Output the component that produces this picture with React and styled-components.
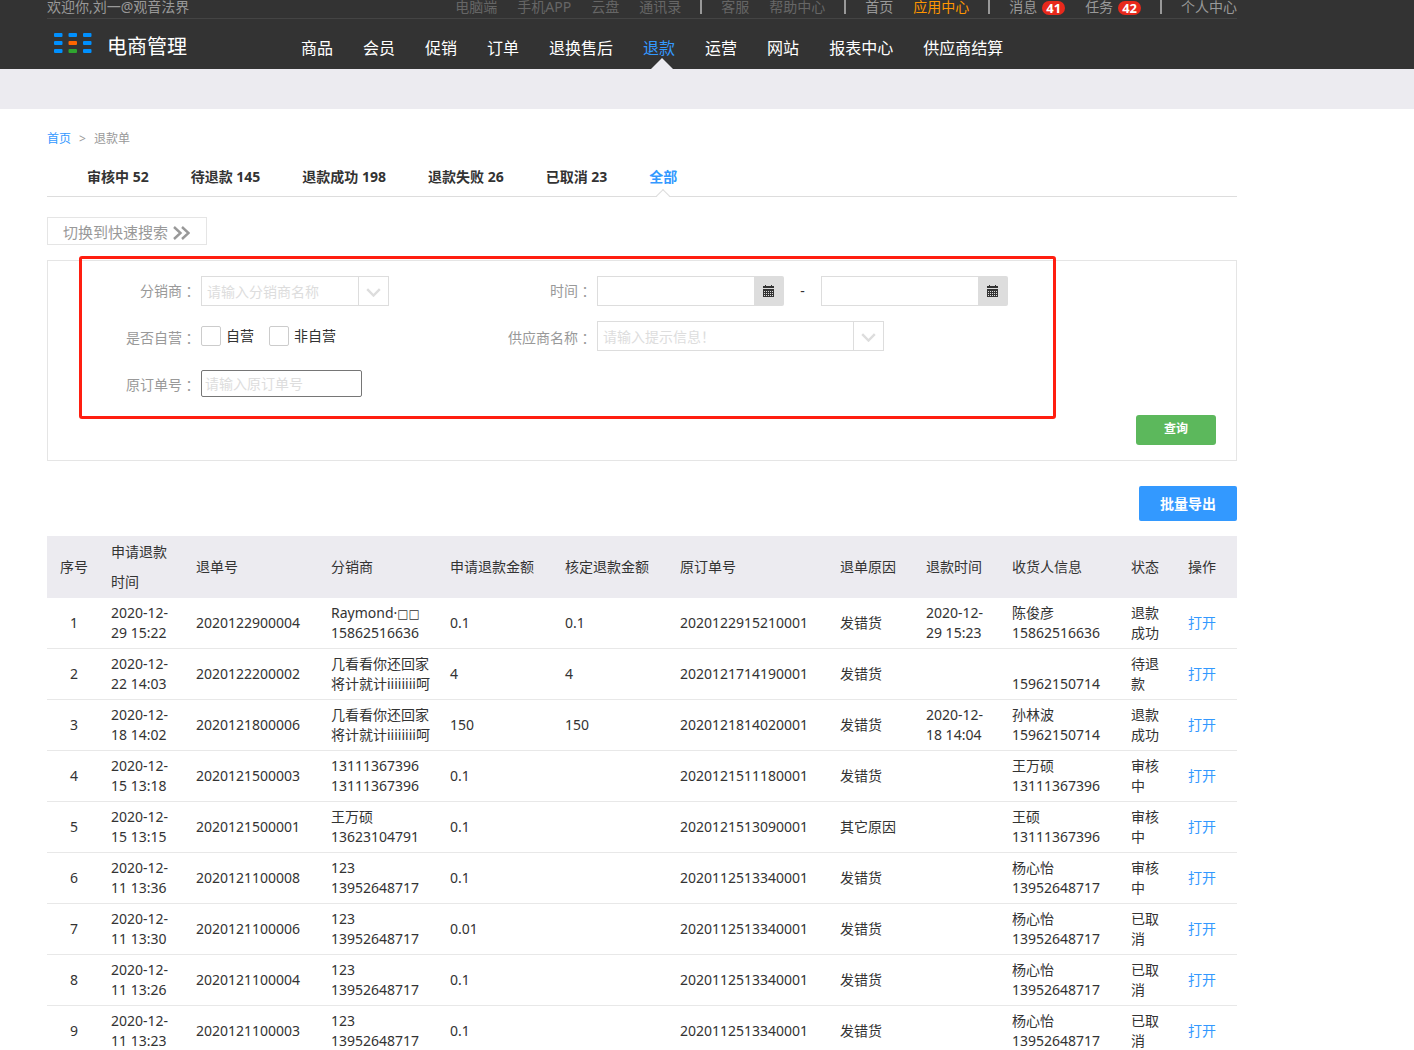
import React from "react";
import styled, { createGlobalStyle, css } from "styled-components";

const topLinks = [
  { text: "电脑端", color: "#666" },
  { text: "手机APP", color: "#666" },
  { text: "云盘", color: "#666" },
  { text: "通讯录", color: "#666" },
  null,
  { text: "客服", color: "#666" },
  { text: "帮助中心", color: "#666" },
  null,
  { text: "首页" },
  { text: "应用中心", color: "#ff9600" },
  null,
  { text: "消息", count: 41 },
  { text: "任务", count: 42 },
  null,
  { text: "个人中心" },
];

const menus = [
  "商品",
  "会员",
  "促销",
  "订单",
  "退换售后",
  "退款",
  "运营",
  "网站",
  "报表中心",
  "供应商结算",
];

const tabs = [
  "审核中 52",
  "待退款 145",
  "退款成功 198",
  "退款失败 26",
  "已取消 23",
  "全部",
];

const columns = [
  { title: "序号", width: 54 },
  { title: "申请退款时间", width: 85 },
  { title: "退单号", width: 135 },
  { title: "分销商", width: 119 },
  { title: "申请退款金额", width: 115 },
  { title: "核定退款金额", width: 115 },
  { title: "原订单号", width: 160 },
  { title: "退单原因", width: 86 },
  { title: "退款时间", width: 86 },
  { title: "收货人信息", width: 119 },
  { title: "状态", width: 57 },
  { title: "操作", width: 59 },
];

const rows = [
  {
    applied: "2020-12-29 15:22",
    refundNo: "2020122900004",
    dealer: ["Raymond·", "15862516636"],
    missing: "□□",
    amount: "0.1",
    approved: "0.1",
    orderNo: "2020122915210001",
    reason: "发错货",
    refunded: "2020-12-29 15:23",
    receiver: ["陈俊彦", "15862516636"],
    status: "退款成功",
  },
  {
    applied: "2020-12-22 14:03",
    refundNo: "2020122200002",
    dealer: ["几看看你还回家", "将计就计iiiiiiii呵"],
    amount: "4",
    approved: "4",
    orderNo: "2020121714190001",
    reason: "发错货",
    receiver: ["", "15962150714"],
    status: "待退款",
  },
  {
    applied: "2020-12-18 14:02",
    refundNo: "2020121800006",
    dealer: ["几看看你还回家", "将计就计iiiiiiii呵"],
    amount: "150",
    approved: "150",
    orderNo: "2020121814020001",
    reason: "发错货",
    refunded: "2020-12-18 14:04",
    receiver: ["孙林波", "15962150714"],
    status: "退款成功",
  },
  {
    applied: "2020-12-15 13:18",
    refundNo: "2020121500003",
    dealer: ["13111367396", "13111367396"],
    amount: "0.1",
    orderNo: "2020121511180001",
    reason: "发错货",
    receiver: ["王万硕", "13111367396"],
    status: "审核中",
  },
  {
    applied: "2020-12-15 13:15",
    refundNo: "2020121500001",
    dealer: ["王万硕", "13623104791"],
    amount: "0.1",
    orderNo: "2020121513090001",
    reason: "其它原因",
    receiver: ["王硕", "13111367396"],
    status: "审核中",
  },
  {
    applied: "2020-12-11 13:36",
    refundNo: "2020121100008",
    dealer: ["123", "13952648717"],
    amount: "0.1",
    orderNo: "2020112513340001",
    reason: "发错货",
    receiver: ["杨心怡", "13952648717"],
    status: "审核中",
  },
  {
    applied: "2020-12-11 13:30",
    refundNo: "2020121100006",
    dealer: ["123", "13952648717"],
    amount: "0.01",
    orderNo: "2020112513340001",
    reason: "发错货",
    receiver: ["杨心怡", "13952648717"],
    status: "已取消",
  },
  {
    applied: "2020-12-11 13:26",
    refundNo: "2020121100004",
    dealer: ["123", "13952648717"],
    amount: "0.1",
    orderNo: "2020112513340001",
    reason: "发错货",
    receiver: ["杨心怡", "13952648717"],
    status: "已取消",
  },
  {
    applied: "2020-12-11 13:23",
    refundNo: "2020121100003",
    dealer: ["123", "13952648717"],
    amount: "0.1",
    orderNo: "2020112513340001",
    reason: "发错货",
    receiver: ["杨心怡", "13952648717"],
    status: "已取消",
  },
];

function LogoIcon() {
  return (
    <svg width="38" height="20" viewBox="0 0 38 20" aria-hidden="true">
      {[0, 1, 2].map((r) =>
        [0, 1, 2].map((c) => (
          <rect
            key={`${r}${c}`}
            x={c * 14.5}
            y={r * 8}
            width="8.5"
            height="4"
            rx="1"
            fill={
              c === 1 && r === 1 ? "#ff6600" : c === 1 && r === 2 ? "#2fa52f" : "#0090ff"
            }
          />
        ))
      )}
    </svg>
  );
}

function Chevron() {
  return (
    <svg width="15" height="9" viewBox="0 0 15 9" aria-hidden="true">
      <path d="M1.2 1.2 L7.5 7.5 L13.8 1.2" fill="none" stroke="#ddd" strokeWidth="2.4" />
    </svg>
  );
}

function CalendarIcon() {
  return (
    <svg width="12" height="12" viewBox="0 0 12 12" aria-hidden="true">
      <path d="M0 1h2V0h1v1h5V0h1v1h2v2H0z" fill="#333" />
      <path d="M0 4h11v8H0z" fill="#333" />
      <path
        d="M1 6.5h9M1 8.5h9M1 10.5h9"
        stroke="#ddd"
        strokeWidth="1"
        strokeDasharray="1 1"
      />
    </svg>
  );
}

function FieldLabel({ htmlFor, children }) {
  return (
    <Label htmlFor={htmlFor}>
      {children}
      <Colon>：</Colon>
    </Label>
  );
}

function Combo({ id, placeholder, wide }) {
  return (
    <ComboBox $wide={wide}>
      <ComboInput id={id} type="text" placeholder={placeholder} />
      <ComboButton type="button" aria-label="展开">
        <Chevron />
      </ComboButton>
    </ComboBox>
  );
}

function DateField({ id, label }) {
  return (
    <DateBox>
      <DateInput id={id} type="text" aria-label={label} />
      <DateButton type="button" aria-label="选择日期">
        <CalendarIcon />
      </DateButton>
    </DateBox>
  );
}

function Header() {
  return (
    <Head>
      <Wrap>
        <TopBar>
          <Welcome>欢迎你,刘一@观音法界</Welcome>
          {topLinks.map((item, i) =>
            item ? (
              <TopLink key={i} href="#" $color={item.color}>
                {item.text}
                {item.count && <Badge>{item.count}</Badge>}
              </TopLink>
            ) : (
              <Separator key={i} />
            )
          )}
        </TopBar>
        <NavBar>
          <Logo href="#">
            <LogoIcon />
            <LogoText>电商管理</LogoText>
          </Logo>
          <Menu>
            {menus.map((name) => (
              <MenuLink key={name} href="#" $active={name === "退款"}>
                {name}
              </MenuLink>
            ))}
          </Menu>
        </NavBar>
      </Wrap>
    </Head>
  );
}

function SearchPanel() {
  return (
    <Panel>
      <Fields>
        <FieldLabel htmlFor="dealer">分销商</FieldLabel>
        <Field>
          <Combo id="dealer" placeholder="请输入分销商名称" />
        </Field>
        <FieldLabel htmlFor="start">时间</FieldLabel>
        <Field>
          <DateField id="start" label="开始时间" />
          <Dash>-</Dash>
          <DateField id="end" label="结束时间" />
        </Field>

        <FieldLabel htmlFor="self">是否自营</FieldLabel>
        <Field>
          <CheckLabel>
            <Check id="self" type="checkbox" />
            自营
          </CheckLabel>
          <CheckLabel>
            <Check type="checkbox" />
            非自营
          </CheckLabel>
        </Field>
        <FieldLabel htmlFor="supplier">供应商名称</FieldLabel>
        <Field>
          <Combo id="supplier" placeholder="请输入提示信息！" wide />
        </Field>

        <FieldLabel htmlFor="order">原订单号</FieldLabel>
        <Field>
          <OrderInput id="order" type="text" placeholder="请输入原订单号" />
        </Field>
      </Fields>
      <QueryButton type="button">查询</QueryButton>
      <Highlight />
    </Panel>
  );
}

function RefundTable() {
  return (
    <Table>
      <colgroup>
        {columns.map((col) => (
          <col key={col.title} style={{ width: `${(col.width / 1190) * 100}%` }} />
        ))}
      </colgroup>
      <thead>
        <tr>
          {columns.map((col, i) => (
            <Th key={col.title} $center={i === 0}>
              {col.title}
            </Th>
          ))}
        </tr>
      </thead>
      <tbody>
        {rows.map((row, i) => (
          <tr key={row.refundNo}>
            <Td $center>{i + 1}</Td>
            <Td>{row.applied}</Td>
            <Td>{row.refundNo}</Td>
            <Td $nowrap>
              {row.dealer[0]}
              {row.missing && <Missing>{row.missing}</Missing>}
              <br />
              {row.dealer[1]}
            </Td>
            <Td>{row.amount}</Td>
            <Td>{row.approved}</Td>
            <Td>{row.orderNo}</Td>
            <Td>{row.reason}</Td>
            <Td>{row.refunded}</Td>
            <Td>
              {row.receiver[0]}
              <br />
              {row.receiver[1]}
            </Td>
            <Td>{row.status}</Td>
            <Td>
              <Link href="#">打开</Link>
            </Td>
          </tr>
        ))}
      </tbody>
    </Table>
  );
}

function App() {
  return (
    <>
      <GlobalStyle />
      <Header />
      <SubBand />
      <Wrap as="main">
        <Crumbs>
          <Link href="#">首页</Link>
          <span>&gt;</span>
          <span>退款单</span>
        </Crumbs>
        <Tabs>
          {tabs.map((name) => (
            <Tab key={name} href="#" $active={name === "全部"}>
              {name}
            </Tab>
          ))}
        </Tabs>
        <SwitchButton type="button">
          切换到快速搜索
          <svg width="17" height="14" viewBox="0 0 17 14" aria-hidden="true">
            <path
              d="M1 1 L7.5 7 L1 13 M9 1 L15.5 7 L9 13"
              fill="none"
              stroke="#999"
              strokeWidth="2.4"
            />
          </svg>
        </SwitchButton>
        <SearchPanel />
        <Actions>
          <ExportButton type="button">批量导出</ExportButton>
        </Actions>
        <RefundTable />
      </Wrap>
    </>
  );
}

export default App;

const GlobalStyle = createGlobalStyle`
  * {
    box-sizing: border-box;
  }

  body {
    margin: 0;
    background: #fff;
    color: #333;
    font-family: "Noto Sans", "Noto Sans CJK SC", sans-serif;
    font-size: 14px;
    line-height: 20px;
  }

  a {
    text-decoration: none;
  }

  input,
  button {
    font-family: inherit;
    font-size: 14px;
  }

  input::placeholder {
    color: #ddd;
    opacity: 1;
  }
`;

const Wrap = styled.div`
  max-width: 1190px;
  margin-left: 47px;
`;

const Head = styled.header`
  background: #333;
`;

const TopBar = styled.div`
  display: flex;
  gap: 20px;
  height: 19px;
  border-bottom: 1px solid #444;
  line-height: 14px;
`;

const Welcome = styled.span`
  margin-right: auto;
  color: #999;
`;

const TopLink = styled.a`
  display: flex;
  gap: 5px;
  color: ${(props) => props.$color || "#999"};
`;

const Separator = styled.span`
  width: 2px;
  height: 14px;
  margin: 0 -1px;
  background: #999;
`;

const Badge = styled.span`
  height: 14px;
  margin-top: 1px;
  padding: 0 4px;
  border-radius: 7px;
  background: #e8291c;
  color: #fff;
  font-size: 13px;
  font-weight: bold;
`;

const NavBar = styled.div`
  display: flex;
  height: 50px;
`;

const Logo = styled.a`
  display: flex;
  align-items: center;
  gap: 15px;
  width: 254px;
  padding: 0 0 2px 7px;
  color: #fff;
`;

const LogoText = styled.span`
  padding-top: 8px;
  font-size: 20px;
  line-height: 24px;
`;

const Menu = styled.nav`
  display: flex;
  gap: 30px;
  font-size: 16px;
  line-height: 58px;
`;

const MenuLink = styled.a`
  position: relative;
  color: ${(props) => (props.$active ? "#3399ff" : "#fff")};

  ${(props) =>
    props.$active &&
    css`
      &:after {
        position: absolute;
        content: "";
        left: calc(50% - 8px);
        bottom: 0;
        border: 11px solid transparent;
        border-top: 0;
        border-bottom-color: #ecebf0;
      }
    `}
`;

const SubBand = styled.div`
  height: 40px;
  background: #ecebf0;
`;

const Crumbs = styled.div`
  display: flex;
  gap: 8px;
  padding-top: 20px;
  color: #999;
  font-size: 12px;
`;

const Tabs = styled.nav`
  display: flex;
  gap: 42px;
  margin-top: 8px;
  padding-left: 40px;
  border-bottom: 1px solid #ddd;
  font-weight: bold;
  line-height: 39px;
`;

const Tab = styled.a`
  position: relative;
  color: ${(props) => (props.$active ? "#3399ff" : "#333")};

  ${(props) =>
    props.$active &&
    css`
      &:after {
        position: absolute;
        content: "";
        left: calc(50% - 5px);
        bottom: -5px;
        width: 9px;
        height: 9px;
        border: solid #ddd;
        border-width: 1px 0 0 1px;
        background: linear-gradient(135deg, #fff 60%, transparent 60%);
        transform: rotate(45deg);
      }
    `}
`;

const SwitchButton = styled.button`
  display: flex;
  align-items: center;
  gap: 5px;
  width: 160px;
  height: 28px;
  margin: 20px 0 15px;
  padding: 0 0 0 15px;
  border: 1px solid #e5e5e5;
  background: #fff;
  color: #999;
  font-size: 15px;

  svg {
    margin-top: 4px;
  }
`;

const Panel = styled.section`
  position: relative;
  padding: 15px 20px 15px 0;
  border: 1px solid #e5e5e5;
`;

const Fields = styled.div`
  display: grid;
  grid-template-columns: 148px 238px 148px 1fr;
  grid-template-rows: 30px 34px 30px;
  gap: 15px 5px;
`;

const Label = styled.label`
  display: flex;
  align-items: center;
  justify-content: flex-end;
  padding-bottom: 1px;
  color: #999;
`;

const Colon = styled.span`
  font-family: "Noto Sans CJK TC", sans-serif;
`;

const Field = styled.div`
  display: flex;
  align-items: flex-start;
`;

const ComboBox = styled.div`
  display: flex;
  width: ${(props) => (props.$wide ? 287 : 188)}px;
  height: 30px;
  border: 1px solid #ddd;
`;

const ComboInput = styled.input`
  flex: 1;
  min-width: 0;
  padding: 0 5px;
  border: 0;
`;

const ComboButton = styled.button`
  display: flex;
  align-items: center;
  justify-content: center;
  width: 30px;
  padding: 3px 0 0;
  border: 0;
  border-left: 1px solid #ddd;
  background: #fff;
`;

const DateBox = styled.div`
  display: flex;
  width: 187px;
  height: 30px;
`;

const DateInput = styled.input`
  flex: 1;
  min-width: 0;
  padding: 0 5px;
  border: 1px solid #ddd;
  border-right: 0;
`;

const DateButton = styled.button`
  display: flex;
  align-items: center;
  justify-content: center;
  width: 30px;
  padding: 0;
  border: 0;
  border-radius: 0 2px 2px 0;
  background: #ddd;
`;

const Dash = styled.span`
  width: 37px;
  line-height: 30px;
  text-align: center;
`;

const CheckLabel = styled.label`
  display: flex;
  align-items: center;
  gap: 5px;
  height: 30px;
  margin-right: 15px;
`;

const Check = styled.input`
  appearance: none;
  width: 20px;
  height: 20px;
  margin: 0;
  border: 1px solid #ccc;
  border-radius: 2px;
  background: #fff;
`;

const OrderInput = styled.input`
  width: 161px;
  height: 27px;
  padding: 0 3px;
  border: 1px solid #767676;
  border-radius: 2px;
`;

const QueryButton = styled.button`
  display: block;
  width: 80px;
  height: 30px;
  margin: 15px 0 0 auto;
  padding: 0 0 4px;
  border: 0;
  border-radius: 3px;
  background: #5cb85c;
  color: #fff;
  font-size: 12px;
  font-weight: bold;
`;

/* red frame drawn around the filter fields */
const Highlight = styled.div`
  position: absolute;
  top: -5px;
  left: 31px;
  right: 180px;
  height: 163px;
  border: 3px solid #ff1e10;
  border-radius: 3px;
  pointer-events: none;
`;

const Actions = styled.div`
  display: flex;
  justify-content: flex-end;
  margin: 25px 0 15px;
`;

const ExportButton = styled.button`
  width: 98px;
  height: 35px;
  padding: 0 0 2px;
  border: 0;
  border-radius: 2px;
  background: #3399ff;
  color: #fff;
  font-weight: bold;
`;

const Table = styled.table`
  width: 100%;
  border-spacing: 0;
  table-layout: fixed;
`;

const Th = styled.th`
  padding: 1px 10px;
  background: #ecebf0;
  font-weight: normal;
  line-height: 30px;
  text-align: ${(props) => (props.$center ? "center" : "left")};
`;

const Td = styled.td`
  padding: 5px 10px;
  height: 51px;
  border-bottom: 1px solid #e8e8e8;
  text-align: ${(props) => (props.$center ? "center" : "left")};
  white-space: ${(props) => (props.$nowrap ? "nowrap" : "normal")};
`;

const Missing = styled.span`
  font-family: "DejaVu Sans", sans-serif;
  font-size: 12px;
  line-height: 1;
`;

const Link = styled.a`
  color: #3399ff;
`;
